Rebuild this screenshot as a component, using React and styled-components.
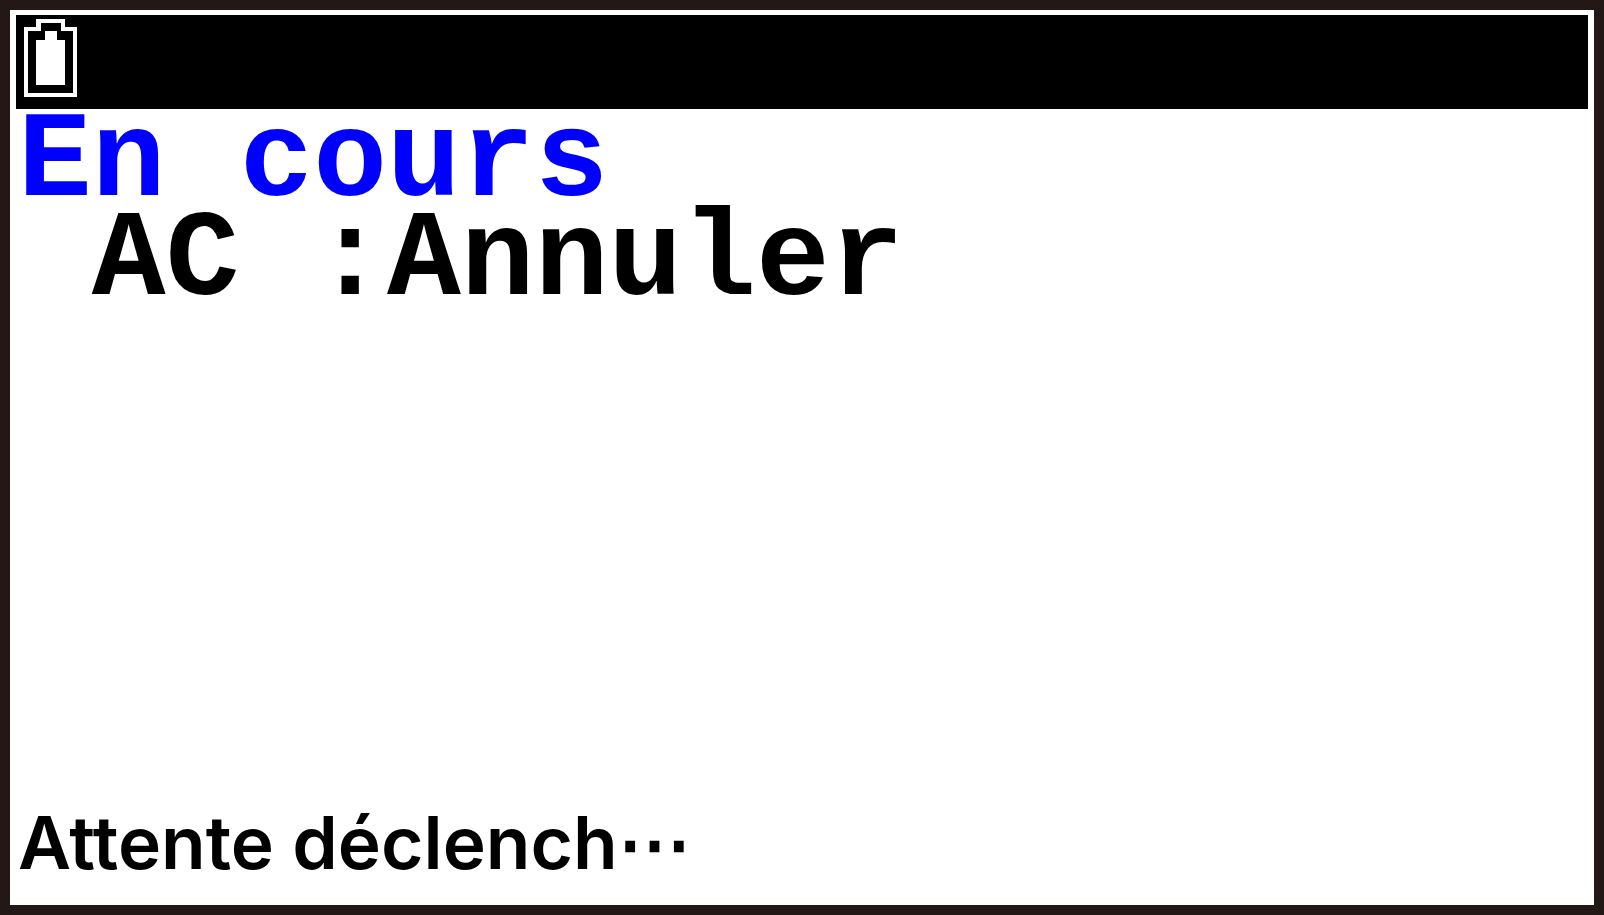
import React from "react";
import styled, { createGlobalStyle } from "styled-components";

const GlobalStyle = createGlobalStyle`
  *, *::before, *::after {
    box-sizing: border-box;
  }
  body {
    margin: 0;
    background: #231815;
  }
`;

const Bezel = styled.div`
  display: flex;
  min-height: 100vh;
  padding: 10px;
  background: #231815;
`;

const Screen = styled.main`
  display: flex;
  flex: 1;
  flex-direction: column;
  padding: 5px 6px;
  background: #fff;
  color: #000;
`;

const StatusBar = styled.header`
  display: flex;
  height: 94px;
  padding: 4px 8px;
  background: #000;
`;

const Content = styled.section`
  padding: 4px 2px;
`;

const Line = styled.p`
  margin: 0;
  font: 700 123px/99px "Liberation Mono", monospace;
  white-space: pre;
  color: ${({ $color }) => $color || "inherit"};
`;

const Message = styled.footer`
  margin-top: auto;
  padding: 0 2px 20px;
  font: 600 73px/74px Inter, sans-serif;
  white-space: pre;
`;

function Battery() {
  return (
    <svg width="53" height="78" viewBox="0 0 53 78" shapeRendering="crispEdges" role="img" aria-label="Batterie">
      <path fill="#fff" d="M12 0H41V8H53V78H0V8H12Z" />
      <path fill="#000" d="M17 4H37V12H49V74H4V12H17Z" />
      <path fill="#fff" d="M21 12H33V21H41V66H12V21H21Z" />
    </svg>
  );
}

export default function App() {
  return (
    <Bezel>
      <GlobalStyle />
      <Screen>
        <StatusBar>
          <Battery />
        </StatusBar>
        <Content>
          <Line as="h1" $color="#00f">En cours</Line>
          <Line>{" AC :Annuler"}</Line>
        </Content>
        <Message role="status">Attente déclench⋯</Message>
      </Screen>
    </Bezel>
  );
}
